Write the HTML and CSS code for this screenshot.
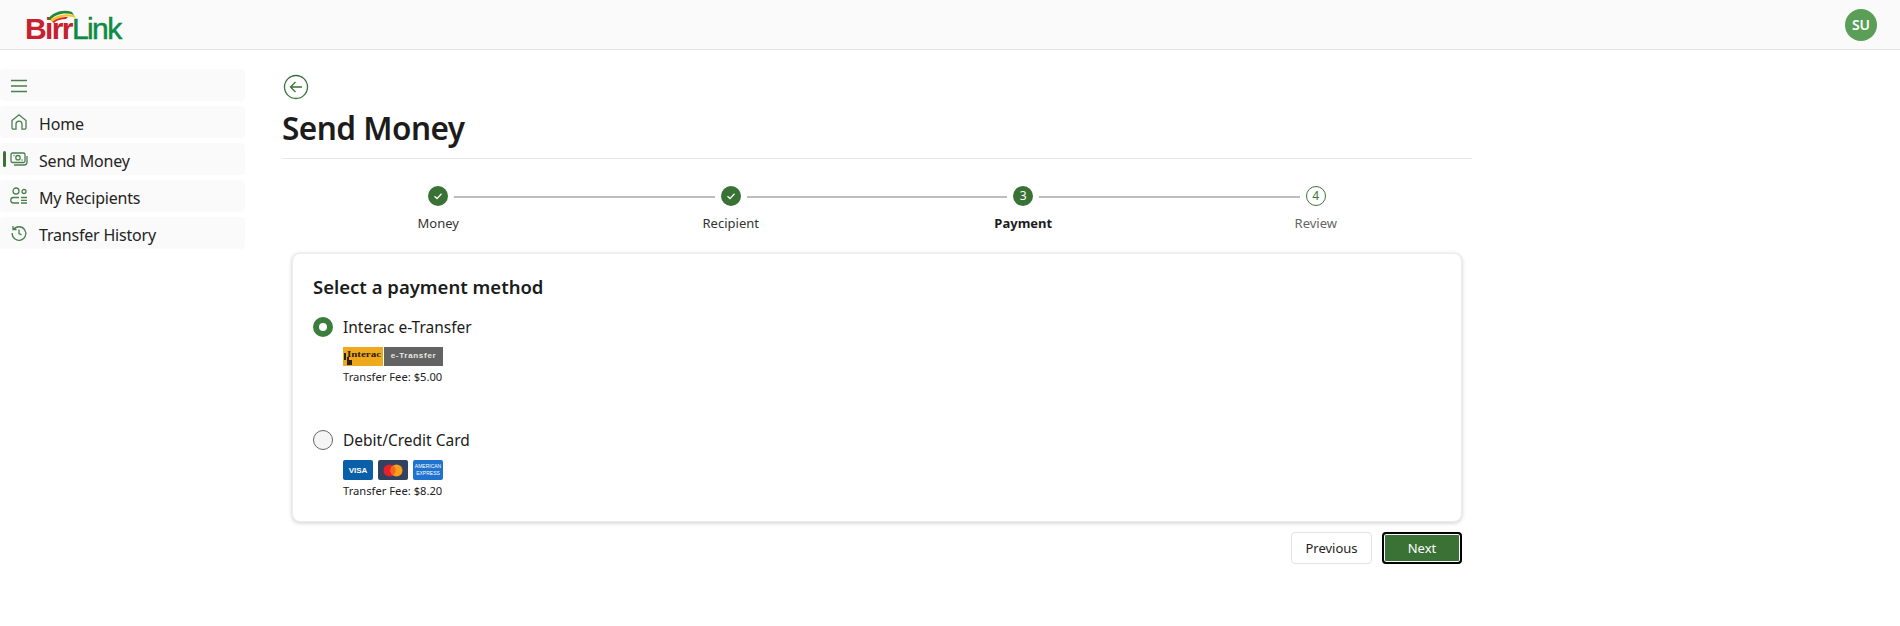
FILE: index.html
```html
<!DOCTYPE html>
<html lang="en">
<head>
	<meta charset="utf-8">
	<title>BirrLink - Send Money</title>
	<link rel="stylesheet" href="styles.css">
</head>
<body>
	<header class="topbar">
		<div class="logo">
			<svg class="logoArc" width="30" height="14" viewBox="0 0 30 14">
				<path d="M1 10C6 3 16 0 25 3L27 6C18 3 9 5 3 11Z" fill="#1f8a3b"/>
				<path d="M3 11C9 6 18 4 27 6L29 9C20 6 11 8 5 13Z" fill="#f2c522"/>
				<path d="M5 13C10 9 15 8 21 8L19 10C14 10 10 11 7 14Z" fill="#d8232a"/>
			</svg>
			<span class="logoRed">Birr</span><span class="logoGreen">Link</span>
		</div>
		<div class="avatar">SU</div>
	</header>

	<div class="page">
		<nav class="sidebar">
			<div class="navItem">
				<svg class="navIcon" viewBox="0 0 18 18"><path d="M1 4.5h16M1 10h16M1 15.5h16"/></svg>
			</div>
			<div class="navItem">
				<svg class="navIcon" viewBox="0 0 18 18"><path d="M2 7.5 9 1.8l7 5.7v7.2a1.5 1.5 0 0 1-1.5 1.500H12v-5a3 3 0 0 0-6 0v5H3.5A1.5 1.5 0 0 1 2 14.7Z"/></svg>
				<span>Home</span>
			</div>
			<div class="navItem navActive">
				<svg class="navIcon" viewBox="0 0 18 18"><rect x="1" y="3" width="14" height="9.5" rx="1.5"/><circle cx="8" cy="7.7" r="2.2"/><path d="M3.5 5.5h1M11.5 10h1M17 6v6a3 3 0 0 1-3 3H4"/></svg>
				<span>Send Money</span>
			</div>
			<div class="navItem">
				<svg class="navIcon" viewBox="0 0 18 18"><circle cx="6" cy="4" r="3"/><circle cx="14" cy="4.5" r="2"/><path d="M9 10.500H3.500a2.750 2.750 0 0 0 0 5.500H9M11 10.500h6M11 13.300h6M11 16h6"/></svg>
				<span>My Recipients</span>
			</div>
			<div class="navItem">
				<svg class="navIcon" viewBox="0 0 18 18"><path d="M3.500 5.500A6.800 6.800 0 1 1 2.200 9M3 2v3.500h3.500M9 5.500v4l2.500 1.300"/></svg>
				<span>Transfer History</span>
			</div>
		</nav>

		<main class="content">
			<svg class="backBtn" width="26" height="26" viewBox="0 0 26 26"><circle cx="13" cy="13" r="11.5"/><path d="M19 13H7.5M12.5 8l-5 5 5 5"/></svg>
			<h1 class="pageTitle">Send Money</h1>

			<ol class="stepper">
				<li class="step stepDone">
					<span class="stepDot"><svg width="10" height="10" viewBox="0 0 10 10"><path d="M1.5 5.3 4 7.6 8.5 2.8"/></svg></span>
					<span class="stepLabel">Money</span>
				</li>
				<li class="step stepDone">
					<span class="stepDot"><svg width="10" height="10" viewBox="0 0 10 10"><path d="M1.5 5.3 4 7.6 8.5 2.8"/></svg></span>
					<span class="stepLabel">Recipient</span>
				</li>
				<li class="step stepCurrent">
					<span class="stepDot">3</span>
					<span class="stepLabel">Payment</span>
				</li>
				<li class="step stepTodo">
					<span class="stepDot">4</span>
					<span class="stepLabel">Review</span>
				</li>
			</ol>

			<section class="card">
				<h2 class="cardTitle">Select a payment method</h2>

				<div class="method">
					<div class="methodHead"><span class="radio radioOn"></span>Interac e-Transfer</div>
					<div class="methodBody">
						<div class="interac">
							<svg class="interacLeft" width="40" height="19" viewBox="0 0 40 19">
								<rect width="40" height="19" fill="#eeaa1c"/>
								<path d="M1 6h2v7H1zM4 10h2v3h3v5H4z" fill="#2b2113"/>
								<text x="4" y="10" textLength="34" lengthAdjust="spacingAndGlyphs" class="interacWord">Interac</text>
							</svg>
							<span class="interacRight">e-Transfer</span>
						</div>
						<div class="fee">Transfer Fee: $5.00</div>
					</div>
				</div>

				<div class="method methodCard">
					<div class="methodHead"><span class="radio"></span>Debit/Credit Card</div>
					<div class="methodBody">
						<div class="cardLogos">
							<span class="cardLogo visa">VISA</span>
							<span class="cardLogo mc">
								<svg width="20" height="13" viewBox="0 0 20 13"><circle cx="6.5" cy="6.5" r="6" fill="#e8202b"/><circle cx="13.5" cy="6.5" r="6" fill="#f79e1b"/><path d="M10 1.6a6 6 0 0 1 0 9.8 6 6 0 0 1 0-9.8Z" fill="#f4641f"/></svg>
							</span>
							<span class="cardLogo amex">AMERICAN<br>EXPRESS</span>
						</div>
						<div class="fee">Transfer Fee: $8.20</div>
					</div>
				</div>
			</section>

			<div class="actions">
				<button class="btn">Previous</button>
				<button class="btn btnNext">Next</button>
			</div>
		</main>
	</div>
</body>
</html>
```

FILE: styles.css
```css
*{
	box-sizing: border-box;
}
body{
	margin: 0;
	background: #fff;
	color: #1c1c1c;
	font-family: "Noto Sans", "Open Sans", sans-serif;
}
.topbar{
	display: flex;
	justify-content: space-between;
	align-items: center;
	height: 50px;
	padding: 0 23px 0 25px;
	background: #fafafa;
	border-bottom: 1px solid #e4e4e4;
}
.logo{
	position: relative;
	font: bold 30px/32px "Liberation Sans", sans-serif;
	letter-spacing: -1.6px;
	margin-top: 9px;
}
.logoArc{
	position: absolute;
	left: 22px;
	top: -4px;
}
.logoRed{
	color: #c8202f;
}
.logoGreen{
	color: #0f8a45;
	font-weight: normal;
	-webkit-text-stroke: 0.5px #0f8a45;
}
.avatar{
	width: 32px;
	height: 32px;
	border-radius: 50%;
	background: #5a9e58;
	color: #fff;
	font-size: 14px;
	font-weight: 600;
	line-height: 32px;
	text-align: center;
}
.page{
	display: flex;
}
.sidebar{
	display: flex;
	flex-direction: column;
	gap: 5px;
	width: 245px;
	padding-top: 19px;
	flex: none;
}
.navItem{
	position: relative;
	display: flex;
	align-items: center;
	gap: 11px;
	height: 32px;
	padding-left: 10px;
	background: #fafafa;
	border-radius: 4px;
	font-size: 16px;
	letter-spacing: -0.2px;
	color: #242424;
}
.navItem span{
	padding-top: 3px;
}
.navIcon{
	width: 18px;
	height: 18px;
	fill: none;
	stroke: #4b7f4e;
	stroke-width: 1.3;
	flex: none;
}
.navActive:before{
	content: "";
	position: absolute;
	left: 3px;
	top: 8px;
	width: 3px;
	height: 16px;
	border-radius: 2px;
	background: #3a7236;
}
.content{
	width: 1190px;
	margin-left: 37px;
	padding-top: 24px;
}
.backBtn{
	display: block;
	margin-left: 1px;
	fill: none;
	stroke: #3a7236;
	stroke-width: 1.3;
}
.pageTitle{
	margin: 1px 0 0;
	height: 58px;
	padding-top: 5px;
	font-size: 31.5px;
	font-weight: 600;
	letter-spacing: -0.5px;
	line-height: 44px;
	border-bottom: 1px solid #e8e8e8;
}
.stepper{
	display: flex;
	margin: 27px 10px 0;
	padding: 0;
	list-style: none;
}
.step{
	position: relative;
	flex: 1;
	display: flex;
	flex-direction: column;
	align-items: center;
	gap: 7px;
	font-size: 13px;
	line-height: 20px;
	color: #333;
}
.step:not(:last-child):after{
	content: "";
	position: absolute;
	left: calc(50% + 16px);
	right: calc(-50% + 16px);
	top: 10px;
	height: 2px;
	background: #bdbdbd;
}
.stepDot{
	display: flex;
	align-items: center;
	justify-content: center;
	width: 20px;
	height: 20px;
	border-radius: 50%;
	background: #3a7236;
	color: #fff;
	font-size: 12px;
}
.stepDot svg{
	fill: none;
	stroke: #fff;
	stroke-width: 1.3;
}
.stepCurrent .stepLabel{
	font-weight: 700;
	color: #1c1c1c;
}
.stepTodo .stepDot{
	background: #fff;
	border: 1px solid #3a7236;
	color: #3a7236;
}
.stepTodo .stepLabel{
	color: #666;
}
.card{
	margin: 20px 10px 0;
	height: 269px;
	padding: 20px;
	background: #fff;
	border: 1px solid #ececec;
	border-radius: 8px;
	box-shadow: 0 1px 4px rgba(0,0,0,0.2);
}
.cardTitle{
	margin: 0;
	font-size: 18.5px;
	font-weight: 600;
	line-height: 26px;
}
.method{
	margin-top: 14px;
}
.methodCard{
	margin-top: 41px;
}
.methodHead{
	display: flex;
	align-items: center;
	gap: 10px;
	font-size: 15.5px;
	line-height: 26px;
}
.radio{
	width: 20px;
	height: 20px;
	border-radius: 50%;
	border: 1px solid #666;
	background: #f5f5f5;
}
.radioOn{
	border: 6px solid #3a7d3d;
	background: #fff;
}
.methodBody{
	padding-left: 30px;
	margin-top: 7px;
}
.interac{
	display: flex;
	width: 100px;
	height: 19px;
	gap: 1px;
}
.interacWord{
	font: bold 8px "Liberation Serif", serif;
	fill: #2b2113;
}
.interacRight{
	flex: 1;
	background: #636363;
	color: #e8e8e8;
	font: bold 8px/17px "Liberation Sans", sans-serif;
	letter-spacing: 0.7px;
	text-align: center;
}
.fee{
	margin-top: 2px;
	font-size: 11.2px;
	line-height: 18px;
	color: #222;
}
.cardLogos{
	display: flex;
	gap: 5px;
}
.cardLogo{
	display: flex;
	align-items: center;
	justify-content: center;
	width: 30px;
	height: 20px;
	border-radius: 2px;
	color: #fff;
}
.visa{
	background: #0b5ea8;
	font: bold 8px "Liberation Sans", sans-serif;
}
.mc{
	background: #32415f;
}
.amex{
	background: #1f72cd;
	font: 5px/7px "Liberation Sans", sans-serif;
	text-align: center;
}
.actions{
	display: flex;
	justify-content: flex-end;
	gap: 10px;
	margin: 10px 10px 0 0;
}
.btn{
	width: 81px;
	height: 32px;
	background: #fff;
	border: 1px solid #e2e2e2;
	border-radius: 4px;
	color: #242424;
	font: 13px "Noto Sans", sans-serif;
}
.btnNext{
	width: 80px;
	background: #3a7236;
	border: 2px solid #000;
	box-shadow: inset 0 0 0 1px #fff;
	color: #fff;
}
```
